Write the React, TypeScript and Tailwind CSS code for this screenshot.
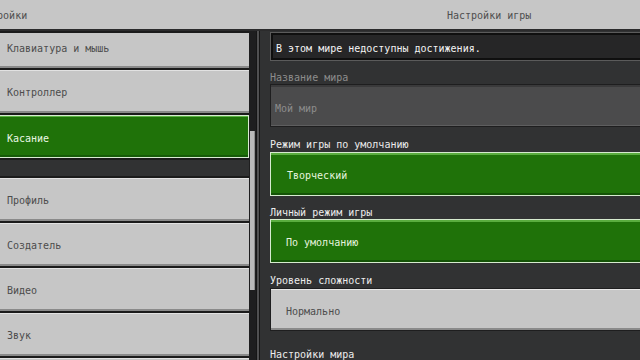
import React from "react";

function GrayBtn({ label, first = false }: { label: string; first?: boolean }) {
  if (first) {
    return (
      <div className="h-[35px] shrink-0 bg-[#c6c6c6] border-b-2 border-b-[#8a8a8a] flex items-center pl-[7px] pb-[2px] text-[#4c4c4c] whitespace-nowrap">
        {label}
      </div>
    );
  }
  return (
    <div className="h-[43px] shrink-0 bg-[#c6c6c6] border-t border-t-[#e2e2e2] border-b-2 border-b-[#8a8a8a] flex items-center pl-[7px] pt-[4px] text-[#4c4c4c] whitespace-nowrap">
      {label}
    </div>
  );
}

function Label({ text, muted = false, className = "" }: { text: string; muted?: boolean; className?: string }) {
  return (
    <div
      className={`h-[14px] pt-[2px] shrink-0 whitespace-nowrap ${muted ? "text-[#8d8d8d]" : "text-[#ececec]"} ${className}`}
    >
      {text}
    </div>
  );
}

function GreenBox({ text, className = "" }: { text: string; className?: string }) {
  return (
    <div className={`w-[420px] shrink-0 border border-[#d6ebcf] bg-[#1f7209] shadow-[inset_0_2px_0_#5aad3f,inset_0_-2px_0_#145306] flex items-center pt-[4px] text-[#e6f4df] whitespace-nowrap ${className}`}>
      {text}
    </div>
  );
}

export default function App() {
  return (
    <div className="w-[640px] h-[360px] overflow-hidden flex flex-col bg-[#313233] font-['DejaVu_Sans_Mono',monospace] text-[10px] leading-[12px]">
      {/* Header */}
      <div className="h-[31px] shrink-0 flex bg-[#c6c6c6] border-b-2 border-[#2b2b2c] text-[#4e4e4e] pt-[2px]">
        <div className="w-[260px] flex items-center overflow-hidden whitespace-nowrap">
          <span className="ml-[-27px]">Настройки</span>
        </div>
        <div className="flex-1 flex items-center pl-[187px] whitespace-nowrap">Настройки игры</div>
      </div>

      {/* Body */}
      <div className="flex flex-1 min-h-0">
        {/* Left list */}
        <div className="w-[249px] shrink-0 flex flex-col gap-[2px] pt-[2px] bg-[#1b1b1b] overflow-hidden">
          <GrayBtn label="Клавиатура и мышь" first />
          <GrayBtn label="Контроллер" />
          <div className="h-[43px] shrink-0 border border-l-0 border-[#d9ecd2] bg-[#1f7209] shadow-[inset_0_1px_0_#5db544,inset_0_-2px_0_#155a07] flex items-center pl-[7px] pt-[4px] text-[#eaf7e4] whitespace-nowrap">
            Касание
          </div>
          <div className="h-[16px] shrink-0 bg-[#313233]" />
          <GrayBtn label="Профиль" />
          <GrayBtn label="Создатель" />
          <GrayBtn label="Видео" />
          <GrayBtn label="Звук" />
          <div className="h-[43px] shrink-0 bg-[#c6c6c6] border-t border-t-[#e2e2e2]" />
        </div>

        {/* Scroll track */}
        <div className="w-[7px] shrink-0 bg-[#1e1e1f] pt-[100px] flex flex-col">
          <div className="ml-[1px] w-[5px] h-[159px] bg-[#b9b9b9] border-r border-[#8e8e8e]" />
        </div>

        {/* Divider */}
        <div className="w-[4px] shrink-0 flex">
          <div className="w-[1px] bg-[#161616]" />
          <div className="w-[2px] bg-[#505051]" />
          <div className="w-[1px] bg-[#161616]" />
        </div>

        {/* Right panel */}
        <div className="flex-1 min-w-0 flex flex-col pl-[10px] overflow-hidden bg-[#313233]">
          <div className="mt-[1px] w-[420px] h-[29px] shrink-0 border border-[#5b5b5b]">
            <div className="h-full border-2 border-[#0f0f0f] bg-[#262627] flex items-center pl-[3px] pt-[5px] text-[#f4f4f4] whitespace-nowrap">
              В этом мире недоступны достижения.
            </div>
          </div>

          <Label text="Название мира" muted className="mt-[9px]" />
          <div className="w-[420px] h-[43px] shrink-0 border border-[#1e1e1f] bg-[#4b4b4c] shadow-[inset_0_2px_0_#3a3a3b,inset_0_-1px_0_#5e5e5f] flex items-center pl-[4px] pt-[6px] text-[#8d8d8d] whitespace-nowrap">
            Мой мир
          </div>

          <Label text="Режим игры по умолчанию" className="mt-[10px]" />
          <GreenBox text="Творческий" className="mt-[1px] h-[44px] pl-[16px]" />

          <Label text="Личный режим игры" className="mt-[9px]" />
          <GreenBox text="По умолчанию" className="h-[44px] pl-[15px]" />

          <Label text="Уровень сложности" className="mt-[10px]" />
          <div className="mt-[1px] w-[420px] h-[43px] shrink-0 border border-[#1e1e1f] bg-[#c6c6c6] shadow-[inset_0_1px_0_#e8e8e8,inset_0_-2px_0_#8a8a8a] flex items-center pl-[15px] pt-[4px] text-[#4c4c4c] whitespace-nowrap">
            Нормально
          </div>

          <Label text="Настройки мира" className="mt-[16px]" />
        </div>
      </div>
    </div>
  );
}
